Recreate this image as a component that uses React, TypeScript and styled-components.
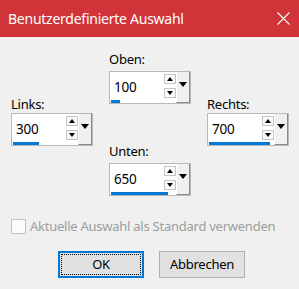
import styled, { createGlobalStyle } from "styled-components";

interface FieldI {
  label: string;
  value: number;
  col: number;
  row: number;
  gap: number;
}

const fields: FieldI[] = [
  { label: "Oben:", value: 100, col: 2, row: 1, gap: 3 },
  { label: "Links:", value: 300, col: 1, row: 2, gap: 0 },
  { label: "Rechts:", value: 700, col: 3, row: 2, gap: 0 },
  { label: "Unten:", value: 650, col: 2, row: 3, gap: 3 },
];

const GlobalStyle = createGlobalStyle`
  html, body {
    margin: 0;
    padding: 0;
    background: #f0f0f0;
  }
`;

const CloseIcon = () => (
  <svg width="13" height="13" viewBox="0 0 13 13">
    <path d="M0.5 0.5 L12.5 12.5 M12.5 0.5 L0.5 12.5" stroke="#fff" strokeWidth="1.1" fill="none" />
  </svg>
);

const SpinField = ({ label, value, col, row, gap }: FieldI) => {
  return (
    <Field $col={col} $row={row}>
      <Label>{label}</Label>
      <SpinBox $gap={gap}>
        <LeftPart>
          <InputRow>
            <Value>{value}</Value>
            <Spinner>
              <SpinButton>
                <Arrow $up />
              </SpinButton>
              <SpinButton>
                <Arrow />
              </SpinButton>
            </Spinner>
          </InputRow>
          <Bar style={{ width: Math.round(value * 0.087) }} />
        </LeftPart>
        <DropButton>
          <Arrow $big />
        </DropButton>
      </SpinBox>
    </Field>
  );
};

const App = () => {
  return (
    <>
      <GlobalStyle />
      <Window>
        <TitleBar>
          <span>Benutzerdefinierte Auswahl</span>
          <CloseIcon />
        </TitleBar>
        <Body>
          <FieldGrid>
            {fields.map((f) => (
              <SpinField key={f.label} {...f} />
            ))}
          </FieldGrid>
          <CheckRow>
            <CheckBox />
            <span>Aktuelle Auswahl als Standard verwenden</span>
          </CheckRow>
          <Buttons>
            <Button $primary>
              <FocusRect>OK</FocusRect>
            </Button>
            <Button>Abbrechen</Button>
          </Buttons>
        </Body>
      </Window>
    </>
  );
};

export default App;

const Window = styled.div`
  width: 299px;
  height: 289px;
  display: flex;
  flex-direction: column;
  background: #f0f0f0;
  font-family: "Noto Sans", "Open Sans", sans-serif;
  font-size: 13px;
  letter-spacing: -0.25px;
  color: #000;
  overflow: hidden;
`;

const TitleBar = styled.div`
  height: 37px;
  flex-shrink: 0;
  display: flex;
  align-items: center;
  justify-content: space-between;
  padding: 0 9px 0 8px;
  background: #d13438;
  color: #fff;
  font-size: 14px;
`;

const Body = styled.div`
  display: flex;
  flex-direction: column;
  padding: 14px 0 0 11px;
`;

const FieldGrid = styled.div`
  display: grid;
  grid-template-columns: 82px 82px 82px;
  grid-template-rows: 45px 47px auto;
  column-gap: 16px;
`;

const Field = styled.div<{ $col: number; $row: number }>`
  grid-column: ${(p) => p.$col};
  grid-row: ${(p) => p.$row} / span ${(p) => (p.$row === 3 ? 1 : 2)};
  align-self: start;
  display: flex;
  flex-direction: column;
`;

const Label = styled.div`
  line-height: 17px;
  height: 17px;
`;

const SpinBox = styled.div<{ $gap: number }>`
  margin-top: ${(p) => p.$gap}px;
  width: 82px;
  height: 33px;
  box-sizing: border-box;
  border: 1px solid #b9b9b9;
  background: #fff;
  display: flex;
`;

const LeftPart = styled.div`
  width: 66px;
  display: flex;
  flex-direction: column;
`;

const InputRow = styled.div`
  height: 28px;
  display: flex;
`;

const Value = styled.div`
  flex: 1;
  padding: 7px 0 0 4px;
  line-height: 17px;
  font-size: 13.5px;
`;

const Spinner = styled.div`
  width: 12px;
  display: flex;
  flex-direction: column;
  gap: 4px;
  padding-top: 2px;
`;

const SpinButton = styled.div`
  width: 12px;
  height: 10px;
  box-sizing: border-box;
  border: 1px solid #c4c4c4;
  background: #fbfbfb;
  display: flex;
  align-items: center;
  justify-content: center;
`;

const Arrow = styled.div<{ $up?: boolean; $big?: boolean }>`
  width: 0;
  height: 0;
  border-left: ${(p) => (p.$big ? 4 : 3.5)}px solid transparent;
  border-right: ${(p) => (p.$big ? 4 : 3.5)}px solid transparent;
  ${(p) =>
    p.$up
      ? "border-bottom: 4px solid #000;"
      : `border-top: ${p.$big ? 5 : 4}px solid #000;`}
`;

const Bar = styled.div`
  height: 3px;
  margin-left: 1px;
  background: #0078d7;
`;

const DropButton = styled.div`
  width: 14px;
  box-sizing: border-box;
  background: #f0f0f0;
  border-left: 1px solid #fff;
  border-right: 1px solid #8a8a8a;
  border-bottom: 1px solid #8a8a8a;
  display: flex;
  justify-content: center;
  padding-top: 10px;
`;

const CheckRow = styled.div`
  display: flex;
  align-items: center;
  gap: 4px;
  margin-top: 22px;
  color: #9d9d9d;
  line-height: 17px;
  white-space: nowrap;
`;

const CheckBox = styled.div`
  width: 15px;
  height: 15px;
  flex-shrink: 0;
  box-sizing: border-box;
  border: 1px solid #c2c2c2;
  background: #fcfcfc;
`;

const Buttons = styled.div`
  display: flex;
  gap: 15px;
  margin: 16px 0 0 47px;
`;

const Button = styled.div<{ $primary?: boolean }>`
  width: 86px;
  height: 27px;
  box-sizing: border-box;
  background: #e1e1e1;
  border: ${(p) => (p.$primary ? "2px solid #0078d7" : "1px solid #adadad")};
  display: flex;
  align-items: center;
  justify-content: center;
  padding: ${(p) => (p.$primary ? "1px" : "0")};
  line-height: 17px;
`;

const FocusRect = styled.div`
  flex: 1;
  align-self: stretch;
  display: flex;
  align-items: center;
  justify-content: center;
  border: 1px dotted #000;
`;
